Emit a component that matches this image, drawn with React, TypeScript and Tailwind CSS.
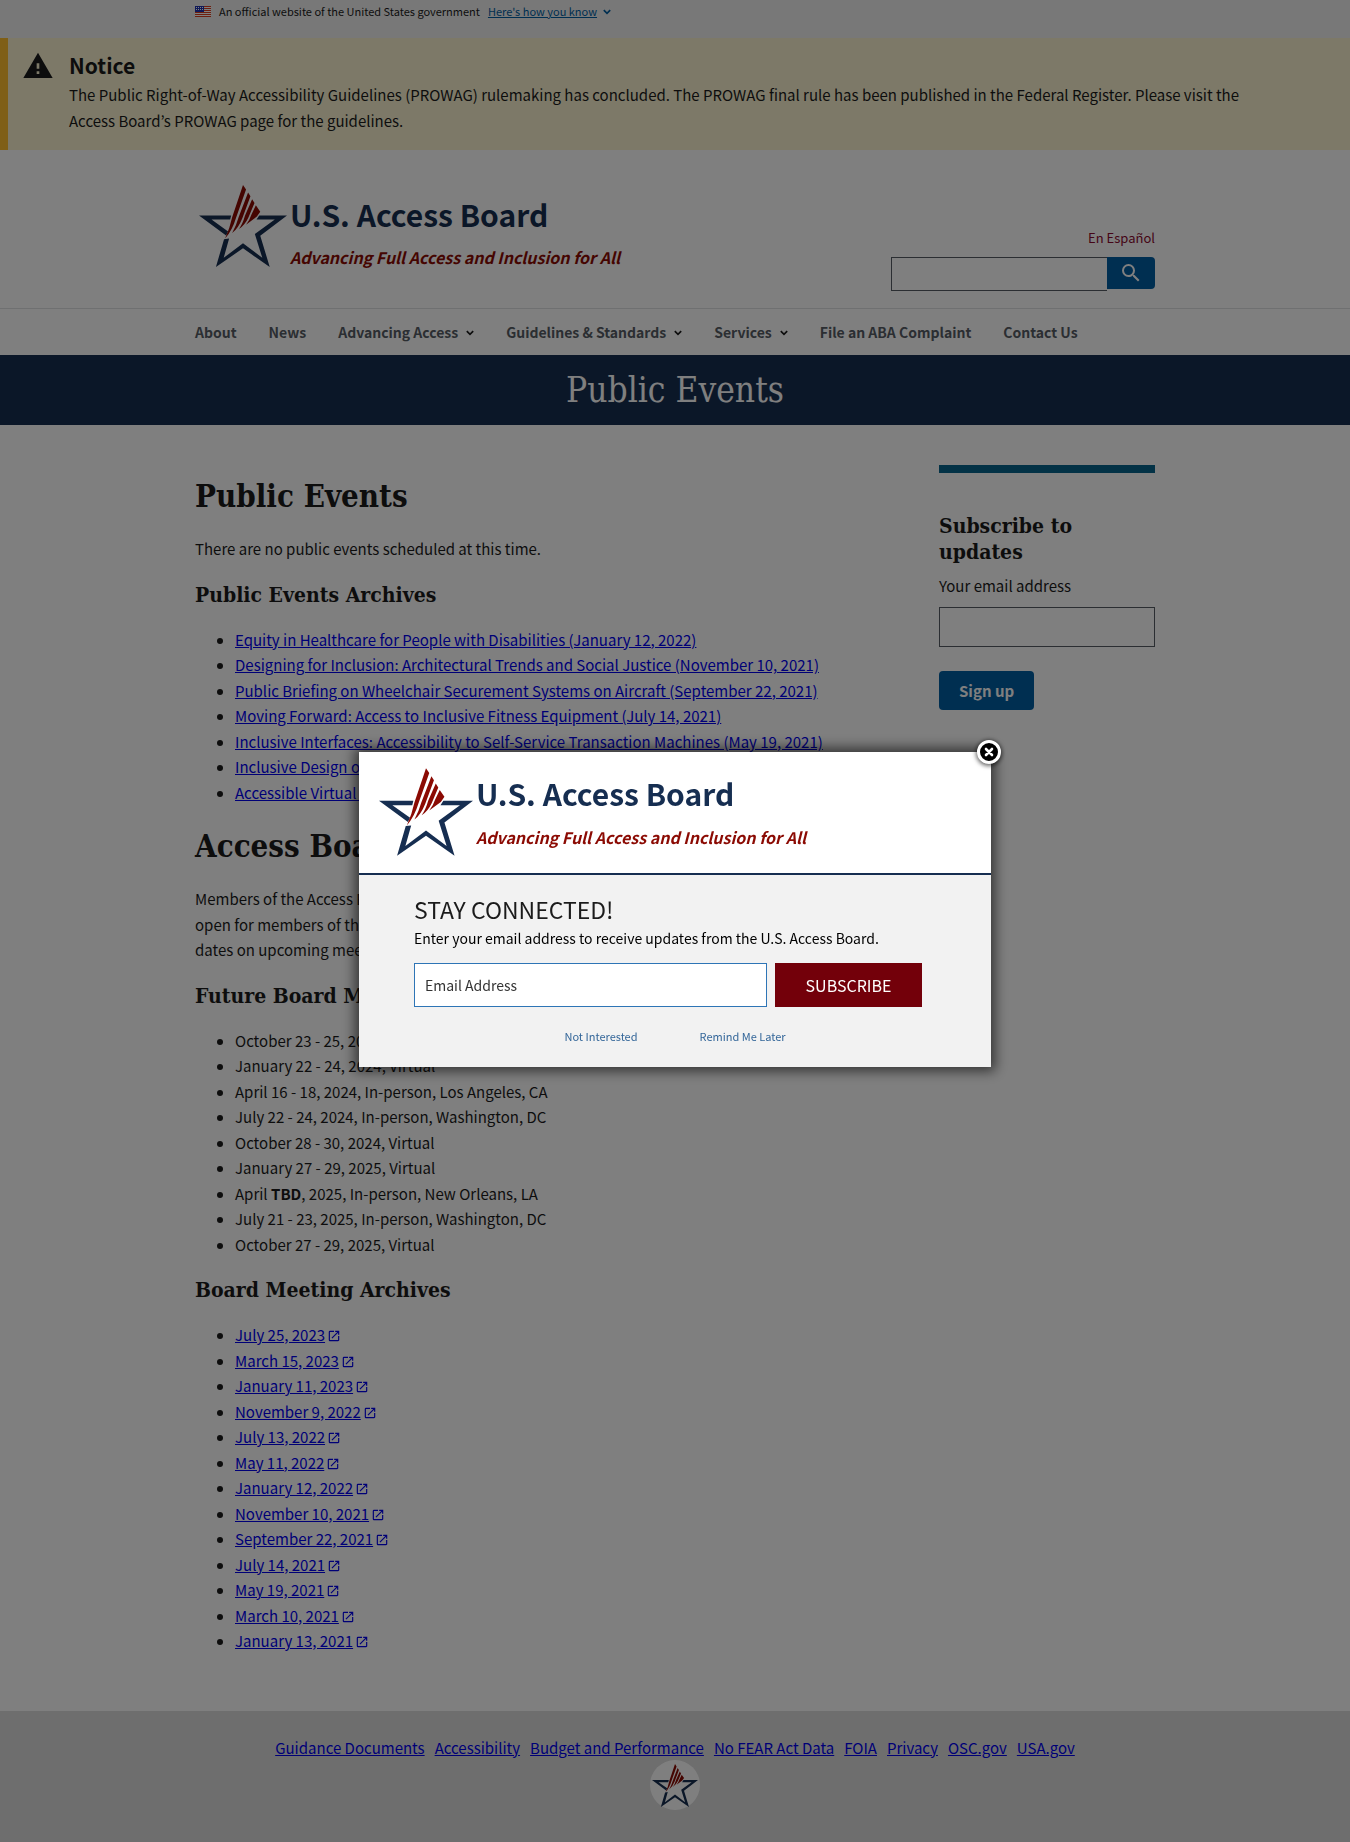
import React from "react";
import { MdLaunch, MdSearch, MdWarning } from "react-icons/md";

const eventArchives = [
  "Equity in Healthcare for People with Disabilities (January 12, 2022)",
  "Designing for Inclusion: Architectural Trends and Social Justice (November 10, 2021)",
  "Public Briefing on Wheelchair Securement Systems on Aircraft (September 22, 2021)",
  "Moving Forward: Access to Inclusive Fitness Equipment (July 14, 2021)",
  "Inclusive Interfaces: Accessibility to Self-Service Transaction Machines (May 19, 2021)",
  "Inclusive Design of Autonomous Vehicles (March 10, 2021)",
  "Accessible Virtual Meetings (January 13, 2021)",
];

const futureMeetings: React.ReactNode[] = [
  "October 23 - 25, 2023, Virtual",
  "January 22 - 24, 2024, Virtual",
  "April 16 - 18, 2024, In-person, Los Angeles, CA",
  "July 22 - 24, 2024, In-person, Washington, DC",
  "October 28 - 30, 2024, Virtual",
  "January 27 - 29, 2025, Virtual",
  <>
    April <strong>TBD</strong>, 2025, In-person, New Orleans, LA
  </>,
  "July 21 - 23, 2025, In-person, Washington, DC",
  "October 27 - 29, 2025, Virtual",
];

const meetingArchives = [
  "July 25, 2023",
  "March 15, 2023",
  "January 11, 2023",
  "November 9, 2022",
  "July 13, 2022",
  "May 11, 2022",
  "January 12, 2022",
  "November 10, 2021",
  "September 22, 2021",
  "July 14, 2021",
  "May 19, 2021",
  "March 10, 2021",
  "January 13, 2021",
];

const navItems = [
  { label: "About" },
  { label: "News" },
  { label: "Advancing Access", menu: true },
  { label: "Guidelines & Standards", menu: true },
  { label: "Services", menu: true },
  { label: "File an ABA Complaint" },
  { label: "Contact Us" },
];

const footerLinks = [
  "Guidance Documents",
  "Accessibility",
  "Budget and Performance",
  "No FEAR Act Data",
  "FOIA",
  "Privacy",
  "OSC.gov",
  "USA.gov",
];

function Star({ className }: { className: string }) {
  return (
    <svg viewBox="0 0 260 242" className={className} aria-hidden="true">
      <g fill="#162e51">
        <path d="M0 90H95L92 102H37L86 137L80 149Z" />
        <path d="M74 160L89 158L73 215L130 172L187 215L165 145L224 102H170L178 90H260L181 150L209 242L130 187L50 242Z" />
      </g>
      <g fill="#8b0a03">
        <path d="M130 0L139 13L110 95Q98 135 77 158Q91 128 98 95Z" />
        <path d="M145 22L152 33L128 98Q116 128 98 142Q110 120 117 95Z" />
        <path d="M157 42L164 53L146 96Q136 118 118 130Q129 115 136 90Z" />
        <path d="M168 60L181 79L171 93L139 117Q150 103 155 87Z" />
      </g>
    </svg>
  );
}

function Chevron({ className }: { className: string }) {
  return (
    <svg viewBox="0 0 8 6" className={"h-[6px] w-2 " + className} aria-hidden="true">
      <path d="M.8 1.2L4 4.4L7.2 1.2" fill="none" stroke="currentColor" strokeWidth="1.7" />
    </svg>
  );
}

function Flag() {
  return (
    <svg viewBox="0 0 16 11" className="h-[11px] w-4" aria-hidden="true">
      <rect width="16" height="11" fill="#fff" />
      <path d="M0 .5h16M0 2.5h16M0 4.5h16M0 6.5h16M0 8.5h16M0 10.5h16" stroke="#db3e1f" />
      <rect width="9" height="6" fill="#1e33b1" />
      <path d="M1 1.5h7M1 3.5h7" stroke="#fff" strokeDasharray="1 1" />
    </svg>
  );
}

function Brand({ star, title }: { star: string; title: string }) {
  return (
    <a href="#" className="flex items-start">
      <Star className={star} />
      <span className="flex flex-col pl-[3px] font-bold">
        <span className={"text-[30px] text-[#162e51] " + title}>U.S. Access Board</span>
        <span className="text-base leading-[26px] text-[#8b0a03] italic">
          Advancing Full Access and Inclusion for All
        </span>
      </span>
    </a>
  );
}

const serif = "font-['DejaVu_Serif_Condensed','DejaVu_Serif',serif]";
const h2Style = serif + " mb-[22px] text-[31px] leading-9 font-bold";
const h3Style = serif + " mt-5 mb-[19px] text-[21px] leading-[26px] font-bold";

export default function App() {
  return (
    <div className="min-h-screen bg-white font-['Noto_Sans_CJK_KR','Noto_Sans',sans-serif] text-[15px] leading-[1.7] text-[#1b1b1b]">
      <section className="bg-[#f0f0f0]" aria-label="Official government website">
        <div className="mx-auto flex max-w-[1024px] items-center px-8 pt-px pb-4 text-[11px] leading-[21px]">
          <Flag />
          <p className="pl-2">An official website of the United States government</p>
          <button type="button" className="flex items-center pl-2 text-[#005ea2]">
            <span className="underline">Here's how you know</span>
            <Chevron className="ml-[6px]" />
          </button>
        </div>
      </section>

      <section
        className="flex gap-[15px] border-l-8 border-[#ffbe2e] bg-[#faf3d1] px-[14px] pt-3 pb-4"
        aria-label="Notice"
      >
        <MdWarning className="size-8 shrink-0" />
        <div className="pr-20">
          <h2 className="mb-[2px] text-[21px] leading-[30px] font-bold">Notice</h2>
          <p className="leading-[26px]">
            The Public Right-of-Way Accessibility Guidelines (PROWAG) rulemaking has concluded. The PROWAG final rule has
            been published in the Federal Register. Please visit the Access Board’s PROWAG page for the guidelines.
          </p>
        </div>
      </section>

      <header>
        <div className="mx-auto flex min-h-[158px] max-w-[1024px] items-end justify-between px-8 pt-[34px] pb-[17px]">
          <div className="self-start pl-1">
            <Brand star="h-[84px] w-[88px]" title="leading-[60px]" />
          </div>
          <div className="flex w-[264px] flex-col">
            <a href="#" className="self-end text-[13px] leading-[22px] text-[#8b0a2f]">
              En Español
            </a>
            <form className="mt-2 flex items-start" role="search">
              <input
                type="search"
                aria-label="Search"
                className="h-[34px] min-w-0 flex-1 border border-r-0 border-[#565c65]"
              />
              <button
                type="button"
                aria-label="Search"
                className="flex h-8 w-12 items-center justify-center rounded-r bg-[#005ea2] text-white"
              >
                <MdSearch className="size-6" />
              </button>
            </form>
          </div>
        </div>
        <nav className="border-t border-[#dfe1e2]" aria-label="Primary">
          <ul className="mx-auto flex max-w-[1024px] gap-8 px-8 py-3 text-[14px] leading-[22px] font-bold text-[#565c65]">
            {navItems.map((item) => (
              <li key={item.label}>
                {item.menu ? (
                  <button type="button" className="flex items-center">
                    {item.label}
                    <Chevron className="mt-[2px] ml-2 text-[#1b1b1b]" />
                  </button>
                ) : (
                  <a href="#">{item.label}</a>
                )}
              </li>
            ))}
          </ul>
        </nav>
      </header>

      <div className="bg-[#162e51] py-3 text-center font-['DejaVu_Serif_Condensed','DejaVu_Serif',serif] text-[35px] leading-[46px] text-white">
        Public Events
      </div>

      <div className="mx-auto flex max-w-[1024px] items-start justify-between gap-8 px-8 pb-[57px]">
        <main className="min-w-0 flex-1 pt-[53px] [&_ul]:list-disc [&_ul]:pl-10 [&_ul_a]:text-[#0000ee] [&_ul_a]:underline">
          <h1 className={h2Style}>Public Events</h1>
          <p>There are no public events scheduled at this time.</p>
          <h3 className={h3Style}>Public Events Archives</h3>
          <ul>
            {eventArchives.map((event) => (
              <li key={event}>
                <a href="#">{event}</a>
              </li>
            ))}
          </ul>
          <h2 className={h2Style + " mt-[23px]"}>Access Board Meetings</h2>
          <p>
            Members of the Access Board meet regularly throughout the year. Meetings are
            <br />
            open for members of the public to attend. Sign up to receive updates and
            <br />
            dates on upcoming meetings.
          </p>
          <h3 className={h3Style}>Future Board Meetings</h3>
          <ul>
            {futureMeetings.map((meeting, i) => (
              <li key={i}>{meeting}</li>
            ))}
          </ul>
          <h3 className={h3Style}>Board Meeting Archives</h3>
          <ul>
            {meetingArchives.map((date) => (
              <li key={date}>
                <a href="#">
                  {date}
                  <MdLaunch className="ml-[2px] inline size-[14px] align-[-2px]" />
                </a>
              </li>
            ))}
          </ul>
        </main>

        <aside className="mt-10 w-[216px] shrink-0 border-t-8 border-[#07648d] pt-10">
          <h3 className="font-['DejaVu_Serif_Condensed','DejaVu_Serif',serif] text-[21px] leading-[26px] font-bold">
            Subscribe to updates
          </h3>
          <form className="mt-2 flex flex-col items-start">
            <label htmlFor="email">Your email address</label>
            <input id="email" type="email" className="mt-2 h-10 w-full border border-[#565c65] px-2" />
            <button
              type="button"
              className="mt-6 h-[39px] rounded bg-[#005ea2] px-5 leading-none font-bold text-white"
            >
              Sign up
            </button>
          </form>
        </aside>
      </div>

      <footer className="flex flex-col items-center bg-[#dcdcdc] pt-6 pb-8">
        <nav className="flex gap-[10px]" aria-label="Footer">
          {footerLinks.map((label) => (
            <a key={label} href="#" className="text-[#0000ee] underline">
              {label}
            </a>
          ))}
        </nav>
        <div className="flex size-[50px] items-center justify-center rounded-full bg-white">
          <Star className="h-[43px] w-[46px]" />
        </div>
      </footer>

      <div className="fixed inset-0 flex items-center justify-center bg-black/50 pb-[23px]">
        <div
          role="dialog"
          aria-label="Stay connected"
          className="relative w-[632px] bg-[#f2f2f2] shadow-[0_0_12px_4px_rgba(0,0,0,0.6)]"
        >
          <button
            type="button"
            aria-label="Close"
            className="absolute -top-3 -right-[10px] flex size-6 items-center justify-center rounded-full border-[3px] border-white bg-black shadow-[0_1px_4px_1px_rgba(0,0,0,0.6)]"
          >
            <svg viewBox="0 0 10 10" className="size-[10px]" aria-hidden="true">
              <path d="M2 2L8 8M8 2L2 8" stroke="#fff" strokeWidth="2.6" strokeLinecap="round" />
            </svg>
          </button>
          <div className="h-[123px] border-b-2 border-[#162e51] bg-white pt-4 pl-5">
            <Brand star="h-[88px] w-[94px]" title="mb-[6px] leading-[50px]" />
          </div>
          <form className="flex flex-col pt-[18px] pr-[69px] pb-[21px] pl-[55px] text-black">
            <h2 className="text-[23px] leading-8 text-[#1b1b1b]">STAY CONNECTED!</h2>
            <p className="text-[14px] leading-[26px]">
              Enter your email address to receive updates from the U.S. Access Board.
            </p>
            <div className="mt-3 flex gap-2">
              <input
                type="email"
                aria-label="Email Address"
                placeholder="Email Address"
                className="h-11 min-w-0 flex-1 border border-[#2e75b6] bg-white px-[10px] text-[14px] placeholder:text-[#333]"
              />
              <button type="button" className="w-[147px] bg-[#73000a] text-base text-white">
                SUBSCRIBE
              </button>
            </div>
            <div className="mt-[19px] flex justify-center gap-[62px] pl-[14px] text-[11px] leading-5 text-[#336699]">
              <button type="button">Not Interested</button>
              <button type="button">Remind Me Later</button>
            </div>
          </form>
        </div>
      </div>
    </div>
  );
}
